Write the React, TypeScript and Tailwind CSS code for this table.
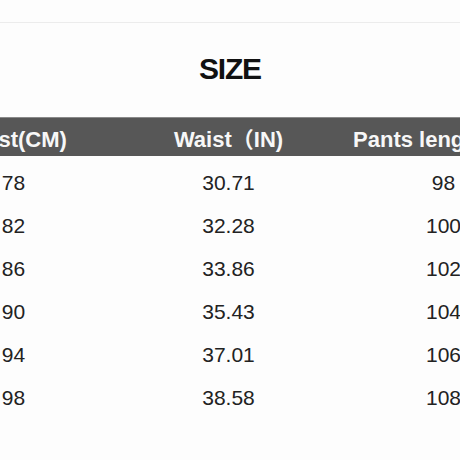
const columns = ["Hip(CM)", "Waist(CM)", "Waist（IN)", "Pants length(CM)"]

const rows = [
  ["92", "78", "30.71", "98"],
  ["96", "82", "32.28", "100"],
  ["100", "86", "33.86", "102"],
  ["104", "90", "35.43", "104"],
  ["108", "94", "37.01", "106"],
  ["112", "98", "38.58", "108"],
]

export default function App() {
  return (
    <div
      className="w-[460px] h-[460px] overflow-hidden bg-[#fdfdfd]"
      style={{ fontFamily: '"Liberation Sans", Arial, "Noto Sans CJK SC", sans-serif' }}
    >
      <div className="h-[23px] border-b border-[#ececec]" />

      {/* Title */}
      <div className="h-[94px] flex items-center justify-center pb-[3px]">
        <h1 className="text-[30px] font-bold tracking-[-1.2px] text-[#111] leading-none">SIZE</h1>
      </div>

      {/* Table, wider than the view, cropped on both sides */}
      <div className="w-[860px] ml-[-309px]">
        <div className="h-[39px] bg-[#575757] border-t border-[#8a8a8a] grid grid-cols-4 items-center pt-[4px]">
          {columns.map((c) => (
            <div key={c} className="text-center text-[22px] font-bold text-[#f7f7f7] whitespace-nowrap">
              {c}
            </div>
          ))}
        </div>

        <div className="pt-[5px]">
          {rows.map((r, i) => (
            <div key={i} className="h-[43px] grid grid-cols-4 items-center">
              {r.map((v, j) => (
                <div key={j} className="text-center text-[21px] text-[#222]">
                  {v}
                </div>
              ))}
            </div>
          ))}
        </div>
      </div>
    </div>
  )
}
